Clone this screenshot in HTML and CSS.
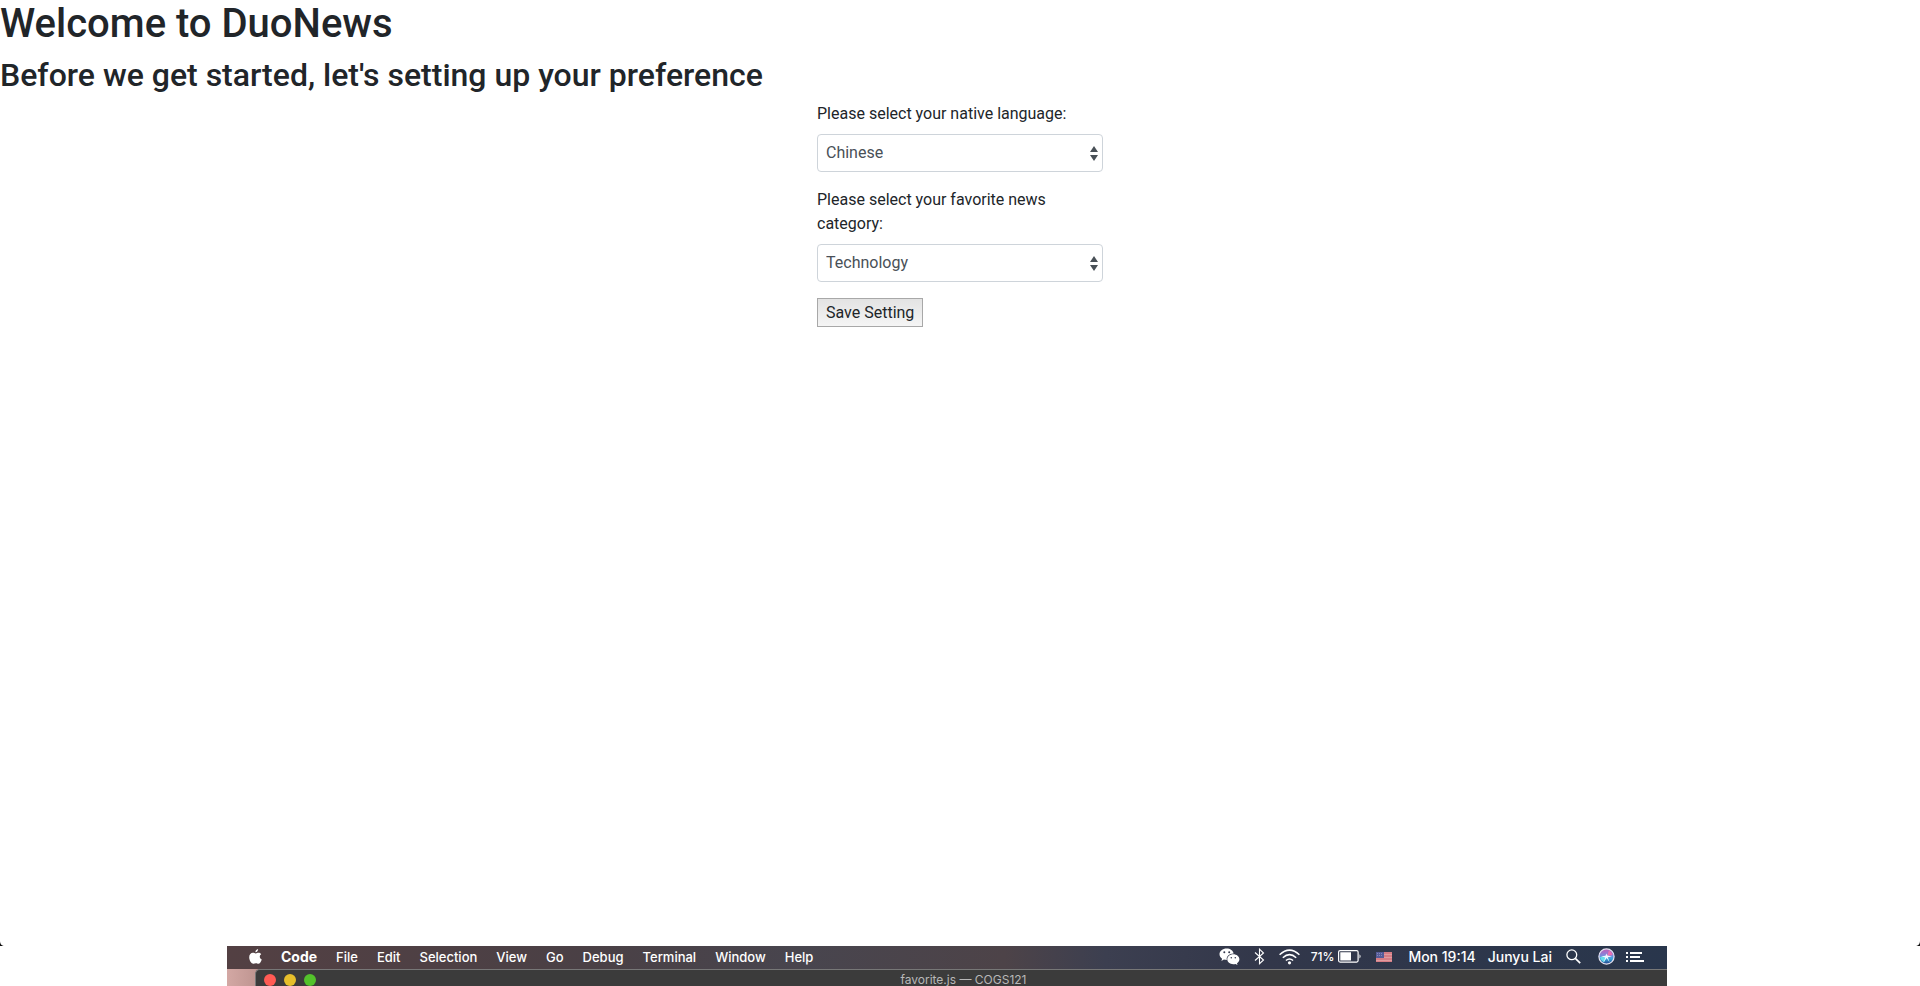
FILE: index.html
```html
<!DOCTYPE html>
<html lang="en">
<head>
<meta charset="utf-8">
<title>DuoNews</title>
<link rel="stylesheet" href="styles.css">
</head>
<body>
<main>
  <h1>Welcome to DuoNews</h1>
  <h2>Before we get started, let's setting up your preference</h2>
  <form class="settings">
    <div class="group">
      <label for="language">Please select your native language:</label>
      <select id="language" class="picker"><option>Chinese</option></select>
    </div>
    <div class="group">
      <label for="category">Please select your favorite news category:</label>
      <select id="category" class="picker"><option>Technology</option></select>
    </div>
    <button type="button" class="save">Save Setting</button>
  </form>
</main>
<footer class="desk">
  <svg class="corner corner-left" viewBox="0 0 5 5"><path d="M0 0C0 3 2 5 5 5H0Z" fill="#111"/></svg>
  <svg class="corner corner-right" viewBox="0 0 5 5"><path d="M5 0C5 3 3 5 0 5H5Z" fill="#111"/></svg>
  <div class="screen">
    <div class="menubar">
      <nav class="menus">
        <svg class="apple" width="13" height="16" viewBox="0 0 13 16"><path fill="#fff" d="M9.1 0C9.2 1.3 8.1 3.2 6.4 3.3 6.2 1.7 7.6.3 9.1 0ZM12.2 5.3C10.1 6.4 10.3 9.4 12.8 10.5 12.1 12.6 10.8 14.8 9.4 14.8 8.4 14.8 8.1 14.2 6.9 14.2 5.7 14.2 5.3 14.8 4.4 14.8 2.3 14.8.2 11.3.2 8.3.2 5.3 2 3.8 3.9 3.8 5.1 3.8 5.9 4.5 6.8 4.5 7.6 4.5 8.4 3.8 9.7 3.8 10.7 3.8 11.6 4.3 12.2 5.3Z"/></svg>
        <b>Code</b><span>File</span><span>Edit</span><span>Selection</span><span>View</span><span>Go</span><span>Debug</span><span>Terminal</span><span>Window</span><span>Help</span>
      </nav>
      <div class="status">
        <svg width="21" height="17" viewBox="0 0 21 17"><path fill="#fff" d="M7.7.5C3.6.5.5 3 .5 6.3c0 1.9 1 3.4 2.6 4.5l-.7 2.1 2.5-1.3c1 .3 1.9.4 2.9.4-.8-3.6 2.6-6.7 6.9-6.5C14 2.500 11.200.5 7.700.5Z"/><path fill="#fff" d="M14.300 6.300c-3.400 0-6 2.200-6 5s2.600 4.900 6 4.900c.8 0 1.500-.1 2.200-.3l2 1.100-.5-1.800c1.400-.9 2.400-2.300 2.400-3.900 0-2.800-2.700-5-6.100-5Z"/><g fill="#34384c"><circle cx="5.300" cy="4.300" r="1"/><circle cx="10.200" cy="4.300" r="1"/><circle cx="12.300" cy="9.700" r=".8"/><circle cx="16.300" cy="9.700" r=".8"/></g></svg>
        <svg class="bluetooth" width="11" height="17" viewBox="0 0 11 17"><path fill="none" stroke="#fff" stroke-width="1.100" d="M1 4.500 9.500 12 5.500 15.700V1.200L9.500 5 1 12.500"/></svg>
        <svg class="wifi" width="21" height="16" viewBox="0 0 21 16"><g fill="none" stroke="#fff" stroke-width="1.500"><path d="M.6 5.700Q10.500-3.500 20.400 5.700M3.800 8.700Q10.500 2.500 17.200 8.700M6.900 11.500Q10.500 8.500 14.100 11.500"/></g><circle cx="10.500" cy="13.800" r="1.600" fill="#fff"/></svg>
        <span class="charge">71%</span>
        <svg class="battery" width="24" height="13" viewBox="0 0 24 13"><rect x=".6" y=".6" width="19.500" height="11.500" rx="1.500" fill="none" stroke="#fff" stroke-width="1.200"/><path fill="#fff" d="M2.300 2.300H13V10.400H2.300ZM21.500 4.300Q23.700 6.400 21.500 8.500Z"/></svg>
        <svg class="flag" width="16" height="10" viewBox="0 0 16 10"><path fill="#d67d85" d="M0 0H16V10H0Z"/><path stroke="#e09b9f" d="M0 2.500H16M0 5.500H16M0 8.500H16"/><path fill="#555b98" d="M0 0H8V6H0Z"/><path stroke="#858ab8" stroke-dasharray="1 1" d="M1 1.500H7M1 3.500H7"/></svg>
        <span class="clock">Mon 19:14</span>
        <span class="user">Junyu Lai</span>
        <svg class="search" width="15" height="15" viewBox="0 0 15 15"><g fill="none" stroke="#fff" stroke-width="1.300"><circle cx="5.800" cy="5.800" r="4.900"/><path stroke-width="1.700" d="M9.300 9.300 14.200 14.200"/></g></svg>
        <svg class="siri" width="17" height="17" viewBox="0 0 17 17"><defs><linearGradient id="orb" x1="0" y1="0" x2="0" y2="1"><stop offset="0" stop-color="#c35bb7"/><stop offset=".4" stop-color="#8586da"/><stop offset=".65" stop-color="#38a7dd"/><stop offset="1" stop-color="#253d86"/></linearGradient></defs><circle cx="8.500" cy="8.500" r="7.600" fill="url(#orb)" stroke="#e6e4f2" stroke-width="1.200"/><path fill="#ec6eb0" d="M9 8 11 2.500Q14 4 14.500 7Z"/><path fill="#67dceb" d="M8.500 8.500 2 9Q3 13 6 14.500Z"/><path fill="#edf7ff" d="M8.300 5.500 9.300 7.500 14 8.500 9.800 9.200 11.500 14 8.600 10 5.500 14.500 7.300 9.500 3 8.200 7.500 7.700Z"/></svg>
        <svg class="list" width="18" height="12" viewBox="0 0 18 12"><path stroke="#fff" stroke-width="2" d="M0 2H2M4 2H16M0 6H2M4 6H14M0 10H2M4 10H18"/></svg>
      </div>
    </div>
    <div class="wallpaper">
      <div class="window">
        <div class="lights"><i class="red"></i><i class="yellow"></i><i class="green"></i></div>
        <span class="title">favorite.js — COGS121</span>
      </div>
    </div>
  </div>
</footer>
</body>
</html>
```
FILE: styles.css
```css
* { box-sizing: border-box; }
body {
  margin: 0;
  min-height: 100vh;
  display: flex;
  flex-direction: column;
  background: #fff;
  color: #212529;
  font: 16px/24px Roboto, "Liberation Sans", sans-serif;
}
h1, h2 { margin: 0 0 8px; font-weight: 500; }
h1 { font-size: 40px; line-height: 48px; }
h2 { font-size: 32px; line-height: 38px; }
.settings { width: 286px; margin: 0 auto; }
.group { margin-bottom: 16px; }
label { display: block; margin-bottom: 8px; }
.picker {
  display: block;
  width: 100%;
  height: 38px;
  padding: 0 28px 0 8px;
  appearance: none;
  border: 1px solid #ced4da;
  border-radius: 4px;
  color: #495057;
  font: inherit;
  background: #fff url("data:image/svg+xml,%3Csvg xmlns='http://www.w3.org/2000/svg' viewBox='0 0 8 15'%3E%3Cpath fill='%23495057' d='M4 0 8 6H0ZM0 9H8L4 15Z'/%3E%3C/svg%3E") no-repeat right 4px center / 8px 15px;
}
.save {
  height: 29px;
  padding: 0 8px;
  border: 1px solid #a8a8a8;
  background: linear-gradient(#e3e3e3, #f5f5f5);
  color: #212529;
  font: inherit;
  line-height: 24px;
}
.desk { position: relative; margin-top: auto; }
.corner { position: absolute; top: -5px; width: 5px; height: 5px; }
.corner-left { left: 0; }
.corner-right { right: 0; }
.screen { width: 75%; margin-left: 11.82%; color: #fff; font: 500 14px/22px Inter, sans-serif; white-space: nowrap; }
.menubar {
  height: 23px;
  padding: 0 23px 2px 22px;
  display: flex;
  justify-content: space-between;
  background: linear-gradient(90deg, #534043, #4a4045 25%, #48454e 40%, #4d4348 54%, #3c3f50 61%, #32374a 72%, #29364c);
}
.menus, .status { display: flex; align-items: center; }
.menus { gap: 19px; font-size: 13px; }
.menus b { font-size: 14px; }
.status > * { flex: none; }
.bluetooth { margin-left: 14px; }
.wifi { margin-left: 14px; }
.charge { margin-left: 11px; font-size: 12px; }
.battery { margin-left: 4px; }
.flag { margin-left: 14px; }
.clock { margin-left: 16px; }
.user { margin-left: 12px; }
.search { margin-left: 14px; }
.siri { margin-left: 17px; }
.list { margin-left: 11px; }
.wallpaper { height: 17px; padding-left: 28px; overflow: hidden; background: linear-gradient(90deg, #d3a8a4, #c09692 28px, #241c22 60px); }
.window {
  height: 30px;
  display: flex;
  justify-content: center;
  position: relative;
  border: 1px solid #777;
  border-right: 0;
  border-top-left-radius: 5px;
  background: #3b3b3b;
}
.lights { position: absolute; left: 8px; top: 4px; display: flex; gap: 8px; }
.lights i { width: 12px; height: 12px; border-radius: 50%; }
.red { background: #ff5b54; }
.yellow { background: #e6bf2b; }
.green { background: #53c22b; }
.title { padding-left: 4px; color: #b8b8b8; font-size: 12px; font-weight: 400; line-height: 19px; }
```
